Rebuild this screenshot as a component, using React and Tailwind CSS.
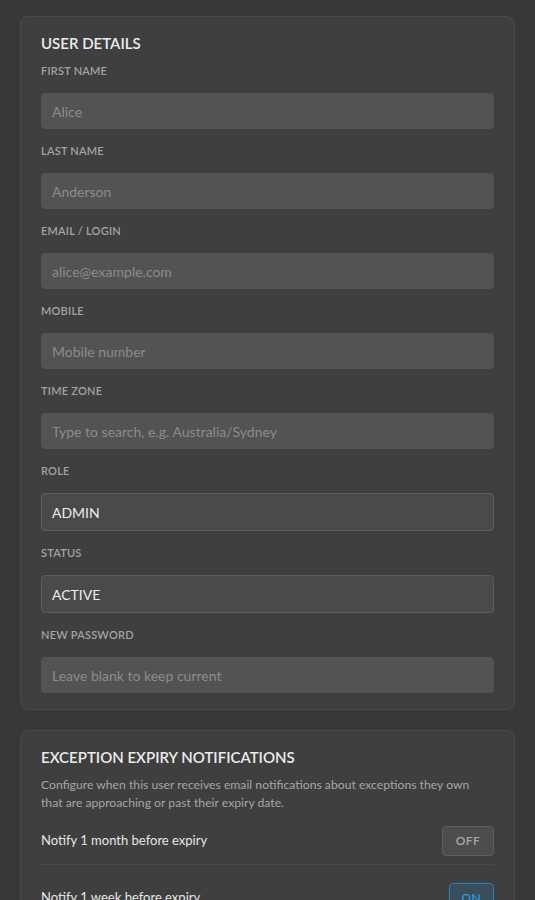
import React, { useState } from 'react';

const font = { fontFamily: 'Lato, "Open Sans", sans-serif' };

function Field({ label, children }) {
  return (
    <div>
      <label className="block text-[11px] font-semibold uppercase tracking-[0.02em] leading-4 text-[#a3a3a3] mt-[14px] mb-[14px]">
        {label}
      </label>
      {children}
    </div>
  );
}

function TextInput({ placeholder, type = "text" }) {
  return (
    <input
      type={type}
      placeholder={placeholder}
      className="w-full h-9 px-[10px] rounded-[4px] bg-[#535353] border border-[#535353] text-[14px] text-[#e6e6e6] placeholder:text-[#8c8c8c] outline-none"
    />
  );
}

function SelectBox({ value }) {
  return (
    <div className="w-full h-[38px] px-[10px] flex items-center rounded-[4px] bg-[#4a4a4a] border border-[#5d5d5d] text-[14px] text-[#ececec]">
      {value}
    </div>
  );
}

function Toggle({ on, onClick }) {
  return on ? (
    <button onClick={onClick} className="h-[30px] px-[12px] rounded-[4px] border border-[#1f86c6] bg-[#3a4d5a] text-[12px] font-semibold tracking-wide text-[#2a9be0]">
      ON
    </button>
  ) : (
    <button onClick={onClick} className="h-[30px] px-[13px] rounded-[4px] border border-[#606060] bg-[#4d4d4d] text-[12px] font-semibold tracking-wide text-[#a8a8a8]">
      OFF
    </button>
  );
}

export default function App() {
  const [month, setMonth] = useState(false);
  const [week, setWeek] = useState(true);

  return (
    <div style={font} className="min-h-screen bg-[#383838] px-5 pt-4 pb-8">
      <div className="rounded-lg border border-[#4b4b4b] bg-[#3f3f3f] px-5 pt-4 pb-4">
        <h2 className="text-[15px] leading-5 font-semibold text-[#ececec] mb-[-4px]">USER DETAILS</h2>
        <Field label="First name"><TextInput placeholder="Alice" /></Field>
        <Field label="Last name"><TextInput placeholder="Anderson" /></Field>
        <Field label="Email / Login"><TextInput placeholder="alice@example.com" /></Field>
        <Field label="Mobile"><TextInput placeholder="Mobile number" /></Field>
        <Field label="Time zone"><TextInput placeholder="Type to search, e.g. Australia/Sydney" /></Field>
        <Field label="Role"><SelectBox value="ADMIN" /></Field>
        <Field label="Status"><SelectBox value="ACTIVE" /></Field>
        <Field label="New password"><TextInput type="password" placeholder="Leave blank to keep current" /></Field>
      </div>

      <div className="mt-5 rounded-lg border border-[#4b4b4b] bg-[#3f3f3f] px-5 pt-4 pb-4">
        <h2 className="text-[15px] leading-5 font-semibold text-[#ececec]">EXCEPTION EXPIRY NOTIFICATIONS</h2>
        <p className="mt-[9px] pr-4 text-[12.2px] leading-[18px] text-[#a6a6a6]">
          Configure when this user receives email notifications about exceptions they own that are approaching or past their expiry date.
        </p>
        <div className="mt-[14px] flex items-center justify-between pb-2 border-b border-[#4a4a4a]">
          <span className="text-[13px] text-[#e6e6e6]">Notify 1 month before expiry</span>
          <Toggle on={month} onClick={() => setMonth((v) => !v)} />
        </div>
        <div className="pt-[18px] flex items-center justify-between pb-2">
          <span className="text-[13px] text-[#e6e6e6]">Notify 1 week before expiry</span>
          <Toggle on={week} onClick={() => setWeek((v) => !v)} />
        </div>
      </div>
    </div>
  );
}
